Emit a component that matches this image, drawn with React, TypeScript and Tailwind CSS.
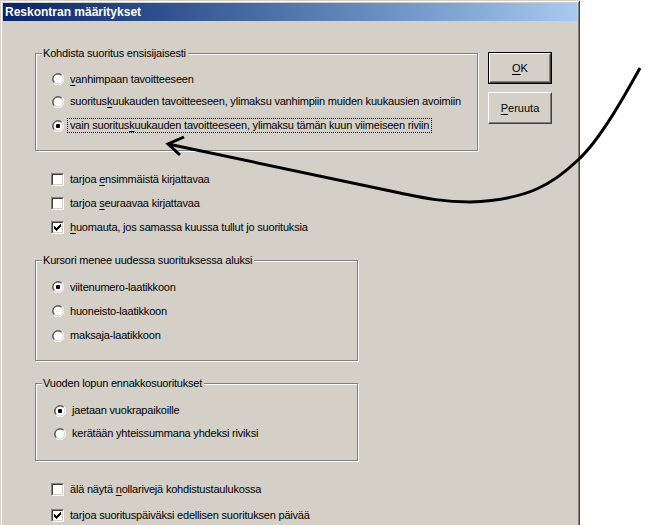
const FONT = "font-['Liberation_Sans',Arial,sans-serif]";

const Radio = ({ checked }: { checked?: boolean }) => (
  <svg width="12" height="12" viewBox="0 0 12 12" className="shrink-0">
    <circle cx="6" cy="6" r="5.5" fill="#ffffff" />
    <path d="M1.76 10.24 A6 6 0 0 1 10.24 1.76" stroke="#808080" strokeWidth="1" fill="none" transform="scale(0.95) translate(0.3 0.3)" />
    <path d="M10.24 1.76 A6 6 0 0 1 1.76 10.24" stroke="#ffffff" strokeWidth="1" fill="none" />
    <path d="M2.46 9.54 A5 5 0 0 1 9.54 2.46" stroke="#404040" strokeWidth="1" fill="none" />
    <path d="M9.54 2.46 A5 5 0 0 1 2.46 9.54" stroke="#d4d0c8" strokeWidth="1" fill="none" />
    {checked && <rect x="4" y="4" width="4" height="4" rx="1" fill="#000" />}
  </svg>
);

const Check = ({ checked }: { checked?: boolean }) => (
  <span className="w-[13px] h-[13px] shrink-0 bg-white border border-t-[#808080] border-l-[#808080] border-r-white border-b-white flex">
    <span className="flex-1 border border-t-[#404040] border-l-[#404040] border-r-[#d4d0c8] border-b-[#d4d0c8] flex items-center justify-center">
      {checked && (
        <svg width="7" height="7" viewBox="0 0 7 7">
          <path d="M0 2h1v1h1v1h1V3h1V2h1V1h1V0h1v3H6v1H5v1H4v1H3v1H2V6H1V5H0z" fill="#000" />
        </svg>
      )}
    </span>
  </span>
);

const Group = ({ title, className, children }: { title: string; className: string; children: React.ReactNode }) => (
  <div className={`relative border border-[#808080] shadow-[inset_1px_1px_0_#fff,1px_1px_0_#fff] ${className}`}>
    <span className="absolute left-[6px] top-[-8px] bg-[#d4d0c8] pl-[1px] pr-[2px] leading-[14px]">{title}</span>
    {children}
  </div>
);

const U = ({ children }: { children: React.ReactNode }) => <span className="underline underline-offset-2">{children}</span>;

const Button = ({ children, def }: { children: React.ReactNode; def?: boolean }) => (
  <div className={`w-[64px] h-[32px] flex ${def ? 'border border-black' : ''}`}>
    <div className="flex-1 flex items-center justify-center border border-t-white border-l-white border-r-[#404040] border-b-[#404040]">
      <div className="w-full h-full flex items-center justify-center border border-t-[#d4d0c8] border-l-[#d4d0c8] border-r-[#808080] border-b-[#808080]">
        {children}
      </div>
    </div>
  </div>
);

export default function App() {
  return (
    <div className={`relative w-[647px] h-[525px] bg-white overflow-hidden flex text-[11px] text-black ${FONT}`}>
      <div className="w-[580px] h-[540px] shrink-0 bg-[#d4d0c8] p-[3px] shadow-[inset_1px_1px_0_#d4d0c8,inset_-1px_0_0_#404040,inset_2px_2px_0_#fff,inset_-2px_0_0_#808080] flex flex-col">
        <div className="h-[18px] bg-gradient-to-r from-[#0a246a] to-[#a6caf0] flex items-center pl-[2px]">
          <span className="text-white font-bold text-[12px]">Reskontran määritykset</span>
        </div>

        <div className="flex pl-[32px] tracking-[-0.2px]">
          <div className="flex flex-col">
            <Group title="Kohdista suoritus ensisijaisesti" className="mt-[32px] w-[443px] h-[98px]">
              <div className="flex flex-col pl-[16px] pt-[14px]">
                <label className="h-[22px] flex items-center gap-[6px]">
                  <Radio />
                  <span><U>v</U>anhimpaan tavoitteeseen</span>
                </label>
                <label className="h-[23px] flex items-center gap-[6px]">
                  <Radio />
                  <span>suoritus<U>k</U>uukauden tavoitteeseen, ylimaksu vanhimpiin muiden kuukausien avoimiin</span>
                </label>
                <label className="h-[25px] flex items-center gap-[3px]">
                  <Radio checked />
                  <span className="border border-dotted border-black px-[2px] leading-[13px]">vain suoritus<U>k</U>uukauden tavoitteeseen, ylimaksu tämän kuun viimeiseen riviin</span>
                </label>
              </div>
            </Group>

            <div className="mt-[16px] flex flex-col pl-[16px]">
              <label className="h-[24px] flex items-center gap-[6px]">
                <Check />
                <span>tarjoa <U>e</U>nsimmäistä kirjattavaa</span>
              </label>
              <label className="h-[24px] flex items-center gap-[6px]">
                <Check />
                <span>tarjoa <U>s</U>euraavaa kirjattavaa</span>
              </label>
              <label className="h-[24px] flex items-center gap-[6px]">
                <Check checked />
                <span><U>h</U>uomauta, jos samassa kuussa tullut jo suorituksia</span>
              </label>
            </div>

            <Group title="Kursori menee uudessa suorituksessa aluksi" className="mt-[21px] w-[323px] h-[101px]">
              <div className="flex flex-col pl-[16px] pt-[14px]">
                <label className="h-[24px] flex items-center gap-[6px]">
                  <Radio checked />
                  <span>viitenumero-laatikkoon</span>
                </label>
                <label className="h-[24px] flex items-center gap-[6px]">
                  <Radio />
                  <span>huoneisto-laatikkoon</span>
                </label>
                <label className="h-[25px] flex items-center gap-[6px]">
                  <Radio />
                  <span>maksaja-laatikkoon</span>
                </label>
              </div>
            </Group>

            <Group title="Vuoden lopun ennakkosuoritukset" className="mt-[22px] w-[323px] h-[78px]">
              <div className="flex flex-col pl-[18px] pt-[15px]">
                <label className="h-[23px] flex items-center gap-[6px]">
                  <Radio checked />
                  <span>jaetaan vuokrapaikoille</span>
                </label>
                <label className="h-[23px] flex items-center gap-[6px]">
                  <Radio />
                  <span>kerätään yhteissummana yhdeksi riviksi</span>
                </label>
              </div>
            </Group>

            <div className="mt-[15px] flex flex-col pl-[16px]">
              <label className="h-[26px] flex items-center gap-[6px]">
                <Check />
                <span>älä näytä <U>n</U>ollarivejä kohdistustaulukossa</span>
              </label>
              <label className="h-[26px] flex items-center gap-[6px]">
                <Check checked />
                <span>tarjoa suorituspäiväksi edellisen suorituksen päivää</span>
              </label>
            </div>
          </div>

          <div className="ml-[10px] mt-[31px] flex flex-col gap-[8px] tracking-normal">
            <Button def><span><U>O</U>K</span></Button>
            <Button><span><U>P</U>eruuta</span></Button>
          </div>
        </div>
      </div>

      <svg className="absolute left-0 top-0 pointer-events-none" width="647" height="525" viewBox="0 0 647 525">
        <path
          d="M640 68 C625 95 600 140 578 160 C555 182 530 200 470 202 C440 202 420 197 400 193 L168 144"
          stroke="#000"
          strokeWidth="3"
          fill="none"
        />
        <path d="M184 137 L168 144 L180 155" stroke="#000" strokeWidth="3" fill="none" />
      </svg>
    </div>
  );
}
